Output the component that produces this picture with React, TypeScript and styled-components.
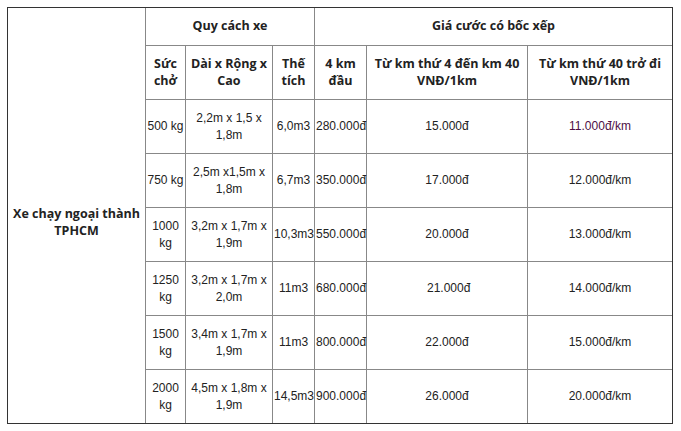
import React from 'react'
import styled, { createGlobalStyle } from 'styled-components'

const GlobalStyle = createGlobalStyle`
  html, body {
    margin: 0;
    padding: 0;
    background: #ffffff;
  }
`

const Page = styled.div`
  padding: 7px;
  width: 681px;
  height: 431px;
  box-sizing: border-box;
  background: #ffffff;
`

const Table = styled.table`
  width: 666px;
  table-layout: fixed;
  border-collapse: separate;
  border-spacing: 0;
  border: 1px solid #333333;
  color: #222222;
  font-family: Arial, 'Liberation Sans', sans-serif;
  font-size: 12px;
`

const Cell = styled.td<{ $last?: boolean; $bottom?: boolean; $h?: number }>`
  box-sizing: border-box;
  height: ${(p) => p.$h ?? 54}px;
  padding: 0 1px;
  text-align: center;
  vertical-align: middle;
  line-height: 16.5px;
  border-right: ${(p) => (p.$last ? 'none' : '1px solid #888888')};
  border-bottom: ${(p) => (p.$bottom ? 'none' : '1px solid #888888')};
`

const HeadCell = styled(Cell)`
  font-family: 'Open Sans', sans-serif;
  font-weight: 700;
  font-size: 12.5px;
  color: #222222;
`

const GroupCell = styled(HeadCell)`
  padding-top: 14px;
  border-bottom: none;
`

const Accent = styled.span`
  color: #4e0f45;
`

const widths = [138, 40, 87, 42, 52, 161, 144]

const rows = [
  ['500 kg', '2,2m x 1,5 x 1,8m', '6,0m3', '280.000đ', '15.000đ', '11.000đ/km'],
  ['750 kg', '2,5m x1,5m x 1,8m', '6,7m3', '350.000đ', '17.000đ', '12.000đ/km'],
  ['1000 kg', '3,2m x 1,7m x 1,9m', '10,3m3', '550.000đ', '20.000đ', '13.000đ/km'],
  ['1250 kg', '3,2m x 1,7m x 2,0m', '11m3', '680.000đ', '\u00a021.000đ', '14.000đ/km'],
  ['1500 kg', '3,4m x 1,7m x 1,9m', '11m3', '800.000đ', '22.000đ', '15.000đ/km'],
  ['2000 kg', '4,5m x 1,8m x 1,9m', '14,5m3', '900.000đ', '26.000đ', '20.000đ/km'],
]

export default function App() {
  return (
    <Page>
      <GlobalStyle />
      <Table>
        <colgroup>
          {widths.map((w, i) => (
            <col key={i} style={{ width: w }} />
          ))}
        </colgroup>
        <tbody>
          <tr>
            <GroupCell rowSpan={8} $h={38}>
              Xe chạy ngoại thành TPHCM
            </GroupCell>
            <HeadCell colSpan={3} $h={38}>
              Quy cách xe
            </HeadCell>
            <HeadCell colSpan={3} $h={38} $last>
              Giá cước có bốc xếp
            </HeadCell>
          </tr>
          <tr>
            <HeadCell>Sức chở</HeadCell>
            <HeadCell>Dài x Rộng x Cao</HeadCell>
            <HeadCell>Thế tích</HeadCell>
            <HeadCell>4 km đầu</HeadCell>
            <HeadCell>Từ km thứ 4 đến km 40 VNĐ/1km</HeadCell>
            <HeadCell $last>Từ km thứ 40 trở đi VNĐ/1km</HeadCell>
          </tr>
          {rows.map((r, i) => {
            const bottom = i === rows.length - 1
            const h = bottom ? 53 : 54
            return (
              <tr key={i}>
                {r.map((v, j) => (
                  <Cell key={j} $h={h} $bottom={bottom} $last={j === r.length - 1}>
                    {i === 0 && j === r.length - 1 ? <Accent>{v}</Accent> : v}
                  </Cell>
                ))}
              </tr>
            )
          })}
        </tbody>
      </Table>
    </Page>
  )
}
